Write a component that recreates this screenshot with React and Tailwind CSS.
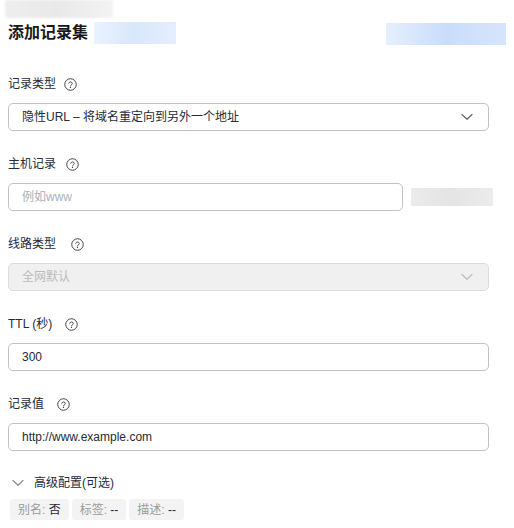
import React from "react";

const FONT = { fontFamily: '"Liberation Sans", "Noto Sans CJK SC", sans-serif' };

function HelpIcon({ gap }) {
  return (
    <svg width="13" height="13" viewBox="0 0 14 14" className="shrink-0" style={{ marginLeft: gap }}>
      <circle cx="7" cy="7" r="6.2" fill="none" stroke="#444" strokeWidth="1.05" />
      <path d="M5.1 5.6a1.95 1.95 0 0 1 3.8.4c0 1.2-1.9 1.4-1.9 2.5" fill="none" stroke="#444" strokeWidth="1.05" strokeLinecap="round" />
      <circle cx="7" cy="10.2" r="0.7" fill="#444" />
    </svg>
  );
}

function Chevron({ color = "#666", className = "" }) {
  return (
    <svg width="12" height="8" viewBox="0 0 12 8" className={className}>
      <path d="M1 1.5l5 4.8 5-4.8" fill="none" stroke={color} strokeWidth="1.2" strokeLinecap="round" strokeLinejoin="round" />
    </svg>
  );
}

function Label({ children, gap }) {
  return (
    <div className="flex h-[20px] items-center text-[12px] text-[#252b3a]">
      <span>{children}</span>
      <HelpIcon gap={gap} />
    </div>
  );
}

function Field({ label, gap, children }) {
  return (
    <div className="mb-[23px]">
      <Label gap={gap}>{label}</Label>
      <div className="mt-[9px]">{children}</div>
    </div>
  );
}

export default function App() {
  return (
    <div className="w-[514px] h-[528px] bg-white px-2 overflow-hidden" style={FONT}>
      {/* breadcrumb strip */}
      <div className="ml-[-3px] mt-0 h-[18px] w-[108px] rounded-[2px] bg-gradient-to-r from-[#eeeeee] via-[#e9e9e9] to-[#f3f3f3] blur-[1px]" />

      {/* heading row */}
      <div className="mt-[4px] flex h-[22px] items-center justify-between">
        <div className="flex items-center">
          <h1 className="text-[16px] font-bold leading-none text-[#191919]">添加记录集</h1>
          <div className="ml-[6px] h-[22px] w-[82px] bg-gradient-to-r from-[#eaf2fe] via-[#d9e7fc] to-[#e4eefd] blur-[0.6px]" />
        </div>
        <div className="mt-[2px] h-[22px] w-[120px] bg-gradient-to-r from-[#e6f0fe] via-[#c9ddfb] to-[#d6e5fc] blur-[0.6px]" />
      </div>

      <div className="mt-[30px]">
        <Field label="记录类型" gap={8}>
          <div className="flex h-[28px] w-[481px] items-center justify-between rounded-[5px] border border-[#c2c2c2] pl-[13px] pr-[15px] text-[12px] text-[#252b3a]">
            <span>隐性URL – 将域名重定向到另外一个地址</span>
            <Chevron />
          </div>
        </Field>

        <Field label="主机记录" gap={10}>
          <div className="flex items-center">
            <div className="flex h-[28px] w-[395px] items-center rounded-[5px] border border-[#c2c2c2] pl-[13px] text-[12px] text-[#adb0b8]">
              例如www
            </div>
            <div className="ml-[8px] h-[18px] w-[82px] bg-gradient-to-r from-[#ebebeb] via-[#e4e4e4] to-[#ececec] blur-[0.6px]" />
          </div>
        </Field>

        <Field label="线路类型" gap={15}>
          <div className="flex h-[28px] w-[481px] items-center justify-between rounded-[5px] border border-[#dcdcdc] bg-[#f0f0f0] pl-[13px] pr-[15px] text-[12px] text-[#bbbbbb]">
            <span>全网默认</span>
            <Chevron color="#bdbdbd" />
          </div>
        </Field>

        <Field label="TTL (秒)" gap={13}>
          <div className="flex h-[28px] w-[481px] items-center rounded-[5px] border border-[#c2c2c2] pl-[13px] text-[12px] text-[#252b3a]">
            300
          </div>
        </Field>

        <Field label="记录值" gap={13}>
          <div className="flex h-[28px] w-[481px] items-center rounded-[5px] border border-[#c2c2c2] pl-[13px] text-[12px] text-[#252b3a]">
            http://www.example.com
          </div>
        </Field>
      </div>

      {/* advanced settings */}
      <div className="mt-[-1px] flex h-[20px] items-center text-[12px] text-[#252b3a]">
        <Chevron color="#8a8a8a" className="ml-[4px]" />
        <span className="ml-[10px]">高级配置(可选)</span>
      </div>
      <div className="ml-[2px] mt-[6px] flex gap-[3px] text-[12px]">
        <span className="flex h-[21px] items-center rounded-[3px] bg-[#f3f3f3] px-[8px] text-[#9a9a9a]">
          别名:&nbsp;<span className="text-[#252b3a]">否</span>
        </span>
        <span className="flex h-[21px] items-center rounded-[3px] bg-[#f3f3f3] px-[8px] text-[#9a9a9a]">
          标签:&nbsp;<span className="text-[#252b3a]">--</span>
        </span>
        <span className="flex h-[21px] items-center rounded-[3px] bg-[#f3f3f3] px-[8px] text-[#9a9a9a]">
          描述:&nbsp;<span className="text-[#252b3a]">--</span>
        </span>
      </div>
    </div>
  );
}
